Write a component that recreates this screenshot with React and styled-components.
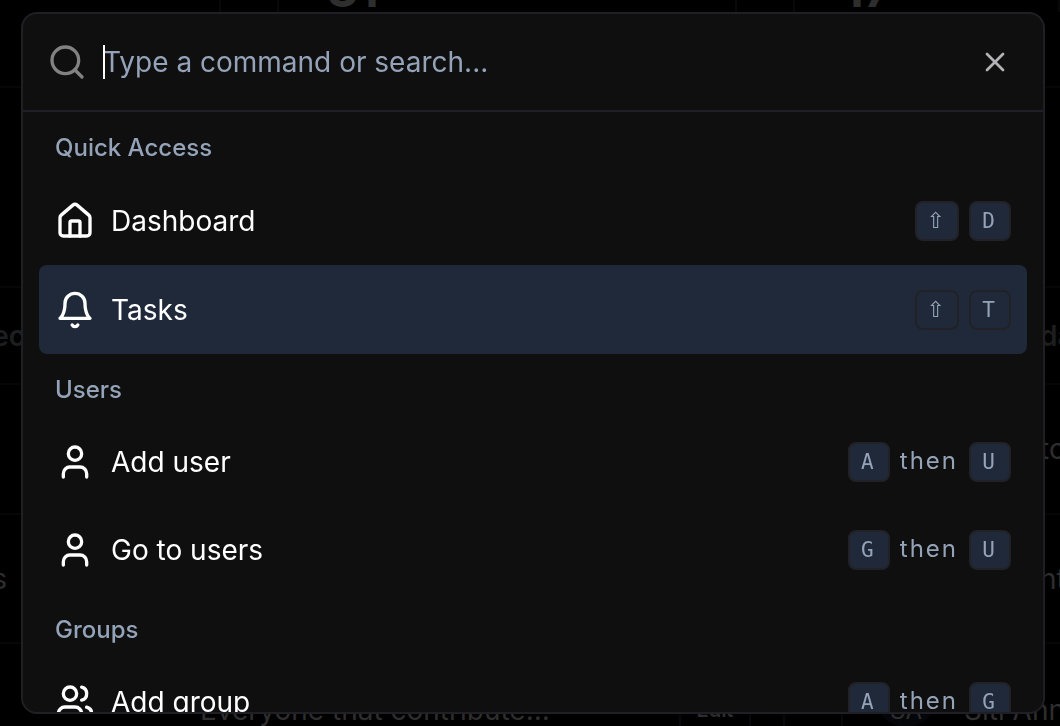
import React from "react";
import styled, { createGlobalStyle } from "styled-components";
import { House, Search, User, Users, X } from "lucide-react";

const GlobalStyle = createGlobalStyle`
  * { box-sizing: border-box; }
  body {
    margin: 0;
    background: #000;
    font-family: Inter, "Liberation Sans", sans-serif;
    overflow: hidden;
  }
`;

/* The dimmed page behind the palette */
const Page = styled.div`
  height: 100vh;
  overflow: hidden;
  color: #2e2e2e;
  font-size: 28px;
  line-height: 32px;
  white-space: nowrap;
`;

const Band = styled.div`
  display: flex;
  justify-content: space-between;
  height: ${(p) => p.$height}px;
  padding-top: ${(p) => p.$pad || 0}px;
  border-bottom: 2px solid #060606;
`;

const Edge = styled.span`
  width: ${(p) => p.$width || 20}px;
  display: flex;
  justify-content: ${(p) => (p.$end ? "flex-end" : "flex-start")};
  overflow: hidden;
  color: ${(p) => (p.$dim ? "#1c1e20" : "#2e2e2e")};
  font-weight: ${(p) => (p.$dim ? 600 : 400)};
`;

const CardBand = styled.div`
  display: grid;
  grid-template-columns: 221px 58px 1fr 58px 265px;
  height: 88px;
  border-bottom: 2px solid #060606;
`;

const CardCell = styled.div`
  height: 12px;
  border-right: 2px solid #080808;
`;

const CardNumber = styled(CardCell)`
  display: flex;
  align-items: flex-end;
  padding-left: 48px;
  font-size: 48px;
  font-weight: 700;
  line-height: 44px;
`;

const TableBand = styled.div`
  display: grid;
  grid-template-columns: 1fr 70px 34px 58px 217px;
  height: 82px;
  padding-top: 50px;
`;

const TableCell = styled.div`
  border-right: 2px solid #08080c;
  padding-left: ${(p) => p.$inset || 0}px;
`;

const EditCell = styled(TableCell)`
  font-size: 20px;
  font-weight: 600;
  text-align: center;
`;

const Member = styled.div`
  display: flex;
  gap: 27px;
  padding-left: 32px;
`;

const Avatar = styled.span`
  width: 62px;
  height: 62px;
  margin-top: -29px;
  padding-top: 30px;
  flex: none;
  border-radius: 50%;
  background: #05060a;
  text-align: center;
  font-size: 24px;
`;

/* The palette */
const Overlay = styled.div`
  position: fixed;
  inset: 0;
  display: flex;
  padding: 12px 15px 12px 21px;
`;

const Palette = styled.div`
  flex: 1;
  min-width: 0;
  display: flex;
  flex-direction: column;
  overflow: hidden;
  border: 2px solid #1f1f25;
  border-radius: 16px;
  background: #0f0f0f;
`;

const Header = styled.div`
  flex: none;
  display: flex;
  align-items: center;
  height: 98px;
  padding: 0 32px 0 24px;
  border-bottom: 2px solid #1f1f25;
  color: #828282;
`;

const Field = styled.label`
  position: relative;
  flex: 1;
  display: flex;
  margin: 0 16px;
`;

const Caret = styled.span`
  position: absolute;
  left: 0;
  top: 3px;
  width: 2px;
  height: 34px;
  background: #fff;
`;

const SearchInput = styled.input`
  width: 100%;
  height: 40px;
  padding: 0;
  border: 0;
  outline: 0;
  background: transparent;
  color: #fff;
  font-family: inherit;
  font-size: 28px;
  &::placeholder { color: #94a3b8; opacity: 1; }
`;

const CloseButton = styled.button`
  display: flex;
  padding: 0;
  border: 0;
  background: transparent;
  color: #b3b3b6;
`;

const List = styled.div`
  flex: 1;
  min-height: 0;
  overflow: hidden;
  padding: 0 16px;
`;

const Heading = styled.h2`
  margin: 0;
  padding: 20px 16px 12px;
  color: #94a3b8;
  font-size: 24px;
  font-weight: 500;
  line-height: 32px;
`;

const Row = styled.button`
  display: flex;
  align-items: center;
  gap: 16px;
  width: 100%;
  height: ${(p) => (p.$tall ? 89 : 88)}px;
  padding: 0 16px;
  border: 0;
  border-radius: 8px;
  background: ${(p) => (p.$active ? "#20293a" : "transparent")};
  color: #fff;
  font-family: inherit;
  font-size: 28px;
  line-height: 40px;
  text-align: left;
`;

const Label = styled.span`
  flex: 1;
`;

const Shortcut = styled.span`
  display: flex;
  align-items: center;
  gap: 10px;
  color: #94a3b8;
  font-size: 24px;
  line-height: 32px;
`;

const Then = styled.span`
  padding: 0 1px 2px 0;
  letter-spacing: 2px;
`;

const Key = styled.kbd`
  display: flex;
  justify-content: center;
  width: ${(p) => (p.$shift ? 44 : 42)}px;
  height: 40px;
  padding-right: 3px;
  border: 2px solid #222226;
  border-radius: 8px;
  background: #20293a;
  font-family: ${(p) => (p.$shift ? '"DejaVu Sans", sans-serif' : '"DejaVu Sans Mono", monospace')};
  font-size: ${(p) => (p.$shift ? 22 : 21)}px;
  line-height: 36px;
`;

function Bell() {
  return (
    <svg width="40" height="40" viewBox="0 0 24 24" fill="none" stroke="currentColor" strokeWidth="2" strokeLinecap="round" strokeLinejoin="round" aria-hidden="true">
      <path d="M6 8a6 6 0 0 1 12 0c0 7 3 9 3 9H3s3-2 3-9" />
      <path d="M10.3 21a1.94 1.94 0 0 0 3.4 0" />
    </svg>
  );
}

const groups = [
  {
    title: "Quick Access",
    items: [
      { label: "Dashboard", icon: House, keys: ["⇧", "D"] },
      { label: "Tasks", icon: Bell, keys: ["⇧", "T"], active: true },
    ],
  },
  {
    title: "Users",
    items: [
      { label: "Add user", icon: User, keys: ["A", "U"], chained: true },
      { label: "Go to users", icon: User, keys: ["G", "U"], chained: true },
    ],
  },
  {
    title: "Groups",
    items: [{ label: "Add group", icon: Users, keys: ["A", "G"], chained: true }],
  },
];

function Command({ label, icon: Icon, keys, chained, active }) {
  return (
    <Row type="button" $active={active} $tall={!chained}>
      <Icon size={40} />
      <Label>{label}</Label>
      <Shortcut>
        <Key $shift={keys[0] === "⇧"}>{keys[0]}</Key>
        {chained && <Then>then</Then>}
        <Key>{keys[1]}</Key>
      </Shortcut>
    </Row>
  );
}

function Backdrop() {
  return (
    <Page aria-hidden="true">
      <CardBand>
        <CardCell />
        <CardCell />
        <CardNumber>31</CardNumber>
        <CardCell />
        <CardNumber>17</CardNumber>
      </CardBand>
      <Band $height={200} />
      <Band $height={97} $pad={32}>
        <Edge $end $dim $width={25}>ec</Edge>
        <Edge $dim>da</Edge>
      </Band>
      <Band $height={130} $pad={48}>
        <Edge />
        <Edge>to</Edge>
      </Band>
      <Band $height={129} $pad={48}>
        <Edge $end $width={7}>s</Edge>
        <Edge>nt</Edge>
      </Band>
      <TableBand>
        <TableCell $inset={200}>Everyone that contribute...</TableCell>
        <EditCell>Edit</EditCell>
        <TableCell />
        <TableCell />
        <Member>
          <Avatar>SA</Avatar>
          <span>Siti Annisa</span>
        </Member>
      </TableBand>
    </Page>
  );
}

export default function App() {
  return (
    <>
      <GlobalStyle />
      <Backdrop />
      <Overlay>
        <Palette role="dialog" aria-label="Command palette">
          <Header>
            <Search size={40} />
            <Field>
              <SearchInput type="text" placeholder="Type a command or search..." aria-label="Type a command or search" />
              <Caret />
            </Field>
            <CloseButton type="button" aria-label="Close">
              <X size={32} />
            </CloseButton>
          </Header>
          <List>
            {groups.map((group) => (
              <section key={group.title}>
                <Heading>{group.title}</Heading>
                {group.items.map((item) => (
                  <Command key={item.label} {...item} />
                ))}
              </section>
            ))}
          </List>
        </Palette>
      </Overlay>
    </>
  );
}
